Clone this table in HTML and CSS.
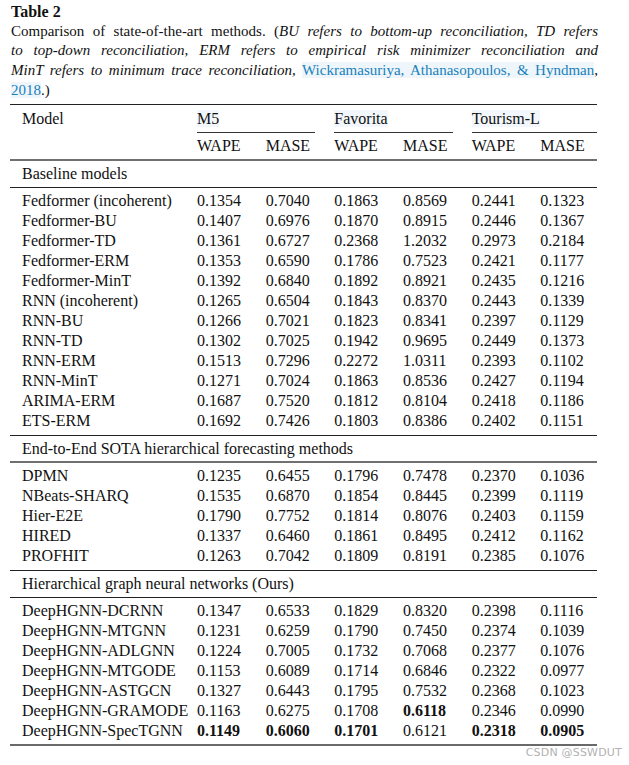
FILE: index.html
```html
<!DOCTYPE html>
<html lang="en">
<head>
<meta charset="utf-8">
<title>Table 2</title>
<link rel="stylesheet" href="styles.css">
</head>
<body>
<div class="page">
  <div class="caption">
    <div class="title">Table 2</div>
    <div class="line just">Comparison of state-of-the-art methods. (<i>BU refers to bottom-up reconciliation, TD refers</i></div>
    <div class="line just"><i>to top-down reconciliation, ERM refers to empirical risk minimizer reconciliation and</i></div>
    <div class="line just"><i>MinT refers to minimum trace reconciliation,</i> <a class="ref">Wickramasuriya, Athanasopoulos, &amp; Hyndman</a>,</div>
    <div class="line"><a class="ref">2018</a>.)</div>
  </div>

  <div class="tbl">
    <div class="row hdr1">
      <div class="cell">Model</div>
      <div class="cell grp"><div class="grp-line"><span class="hl">M5</span></div></div>
      <div class="cell grp"><div class="grp-line"><span class="hl">Favorita</span></div></div>
      <div class="cell grp last"><div class="grp-line"><span class="hl">Tourism-L</span></div></div>
    </div>
    <div class="row hdr2">
      <div class="cell"></div>
      <div class="cell">WAPE</div><div class="cell">MASE</div>
      <div class="cell">WAPE</div><div class="cell">MASE</div>
      <div class="cell">WAPE</div><div class="cell">MASE</div>
    </div>

    <div class="section thin">Baseline models</div>
    <div class="group">
      <div class="row data"><div class="cell">Fedformer (incoherent)</div><div class="cell">0.1354</div><div class="cell">0.7040</div><div class="cell">0.1863</div><div class="cell">0.8569</div><div class="cell">0.2441</div><div class="cell">0.1323</div></div>
      <div class="row data"><div class="cell">Fedformer-BU</div><div class="cell">0.1407</div><div class="cell">0.6976</div><div class="cell">0.1870</div><div class="cell">0.8915</div><div class="cell">0.2446</div><div class="cell">0.1367</div></div>
      <div class="row data"><div class="cell">Fedformer-TD</div><div class="cell">0.1361</div><div class="cell">0.6727</div><div class="cell">0.2368</div><div class="cell">1.2032</div><div class="cell">0.2973</div><div class="cell">0.2184</div></div>
      <div class="row data"><div class="cell">Fedformer-ERM</div><div class="cell">0.1353</div><div class="cell">0.6590</div><div class="cell">0.1786</div><div class="cell">0.7523</div><div class="cell">0.2421</div><div class="cell">0.1177</div></div>
      <div class="row data"><div class="cell">Fedformer-MinT</div><div class="cell">0.1392</div><div class="cell">0.6840</div><div class="cell">0.1892</div><div class="cell">0.8921</div><div class="cell">0.2435</div><div class="cell">0.1216</div></div>
      <div class="row data"><div class="cell">RNN (incoherent)</div><div class="cell">0.1265</div><div class="cell">0.6504</div><div class="cell">0.1843</div><div class="cell">0.8370</div><div class="cell">0.2443</div><div class="cell">0.1339</div></div>
      <div class="row data"><div class="cell">RNN-BU</div><div class="cell">0.1266</div><div class="cell">0.7021</div><div class="cell">0.1823</div><div class="cell">0.8341</div><div class="cell">0.2397</div><div class="cell">0.1129</div></div>
      <div class="row data"><div class="cell">RNN-TD</div><div class="cell">0.1302</div><div class="cell">0.7025</div><div class="cell">0.1942</div><div class="cell">0.9695</div><div class="cell">0.2449</div><div class="cell">0.1373</div></div>
      <div class="row data"><div class="cell">RNN-ERM</div><div class="cell">0.1513</div><div class="cell">0.7296</div><div class="cell">0.2272</div><div class="cell">1.0311</div><div class="cell">0.2393</div><div class="cell">0.1102</div></div>
      <div class="row data"><div class="cell">RNN-MinT</div><div class="cell">0.1271</div><div class="cell">0.7024</div><div class="cell">0.1863</div><div class="cell">0.8536</div><div class="cell">0.2427</div><div class="cell">0.1194</div></div>
      <div class="row data"><div class="cell">ARIMA-ERM</div><div class="cell">0.1687</div><div class="cell">0.7520</div><div class="cell">0.1812</div><div class="cell">0.8104</div><div class="cell">0.2418</div><div class="cell">0.1186</div></div>
      <div class="row data"><div class="cell">ETS-ERM</div><div class="cell">0.1692</div><div class="cell">0.7426</div><div class="cell">0.1803</div><div class="cell">0.8386</div><div class="cell">0.2402</div><div class="cell">0.1151</div></div>
    </div>

    <div class="section thick">End-to-End SOTA hierarchical forecasting methods</div>
    <div class="group">
      <div class="row data"><div class="cell">DPMN</div><div class="cell">0.1235</div><div class="cell">0.6455</div><div class="cell">0.1796</div><div class="cell">0.7478</div><div class="cell">0.2370</div><div class="cell">0.1036</div></div>
      <div class="row data"><div class="cell">NBeats-SHARQ</div><div class="cell">0.1535</div><div class="cell">0.6870</div><div class="cell">0.1854</div><div class="cell">0.8445</div><div class="cell">0.2399</div><div class="cell">0.1119</div></div>
      <div class="row data"><div class="cell">Hier-E2E</div><div class="cell">0.1790</div><div class="cell">0.7752</div><div class="cell">0.1814</div><div class="cell">0.8076</div><div class="cell">0.2403</div><div class="cell">0.1159</div></div>
      <div class="row data"><div class="cell">HIRED</div><div class="cell">0.1337</div><div class="cell">0.6460</div><div class="cell">0.1861</div><div class="cell">0.8495</div><div class="cell">0.2412</div><div class="cell">0.1162</div></div>
      <div class="row data"><div class="cell">PROFHIT</div><div class="cell">0.1263</div><div class="cell">0.7042</div><div class="cell">0.1809</div><div class="cell">0.8191</div><div class="cell">0.2385</div><div class="cell">0.1076</div></div>
    </div>

    <div class="section thin">Hierarchical graph neural networks (Ours)</div>
    <div class="group final">
      <div class="row data"><div class="cell">DeepHGNN-DCRNN</div><div class="cell">0.1347</div><div class="cell">0.6533</div><div class="cell">0.1829</div><div class="cell">0.8320</div><div class="cell">0.2398</div><div class="cell">0.1116</div></div>
      <div class="row data"><div class="cell">DeepHGNN-MTGNN</div><div class="cell">0.1231</div><div class="cell">0.6259</div><div class="cell">0.1790</div><div class="cell">0.7450</div><div class="cell">0.2374</div><div class="cell">0.1039</div></div>
      <div class="row data"><div class="cell">DeepHGNN-ADLGNN</div><div class="cell">0.1224</div><div class="cell">0.7005</div><div class="cell">0.1732</div><div class="cell">0.7068</div><div class="cell">0.2377</div><div class="cell">0.1076</div></div>
      <div class="row data"><div class="cell">DeepHGNN-MTGODE</div><div class="cell">0.1153</div><div class="cell">0.6089</div><div class="cell">0.1714</div><div class="cell">0.6846</div><div class="cell">0.2322</div><div class="cell">0.0977</div></div>
      <div class="row data"><div class="cell">DeepHGNN-ASTGCN</div><div class="cell">0.1327</div><div class="cell">0.6443</div><div class="cell">0.1795</div><div class="cell">0.7532</div><div class="cell">0.2368</div><div class="cell">0.1023</div></div>
      <div class="row data"><div class="cell">DeepHGNN-GRAMODE</div><div class="cell">0.1163</div><div class="cell">0.6275</div><div class="cell">0.1708</div><div class="cell b">0.6118</div><div class="cell">0.2346</div><div class="cell">0.0990</div></div>
      <div class="row data"><div class="cell">DeepHGNN-SpecTGNN</div><div class="cell b">0.1149</div><div class="cell b">0.6060</div><div class="cell b">0.1701</div><div class="cell">0.6121</div><div class="cell b">0.2318</div><div class="cell b">0.0905</div></div>
    </div>
  </div>
  <div class="watermark">CSDN @SSWDUT</div>
</div>
</body>
</html>
```

FILE: styles.css
```css
html, body {
  margin: 0;
  padding: 0;
  background: #ffffff;
}

.page {
  width: 629px;
  padding-top: 2px;
  font-family: "Liberation Serif", "Times New Roman", serif;
  font-size: 16px;
  color: #111111;
}

.caption {
  padding: 0 31px 0 11px;
  font-size: 15px;
  line-height: 19.7px;
}

.title {
  font-size: 16px;
  font-weight: bold;
}

.line.just {
  text-align: justify;
  text-align-last: justify;
}

.ref {
  color: #1a7fba;
  background: #eef6fb;
  text-decoration: none;
}

.tbl {
  margin: 3px 0 0 10px;
  width: 587px;
  border-top: 1px solid #222222;
}

.row {
  display: grid;
  grid-template-columns: 175px repeat(6, 1fr);
}

.cell {
  padding-left: 12px;
  white-space: nowrap;
}

.hdr1 {
  height: 28px;
  line-height: 27px;
}

.hdr1 .grp {
  grid-column: span 2;
  padding-right: 7px;
}

.hdr1 .grp.last {
  padding-right: 0;
}

.grp-line {
  border-bottom: 1px solid #333333;
  height: 27px;
}

.hl {
  background: #f1f7fc;
}

.hdr2 {
  height: 26px;
  line-height: 26px;
  border-bottom: 2px solid #707070;
}

.section {
  height: 26px;
  line-height: 26px;
  padding-left: 12px;
}

.section.thin {
  border-bottom: 1px solid #222222;
}

.section.thick {
  height: 25px;
  border-bottom: 2px solid #707070;
}

.group {
  padding: 3px 0 4px;
  border-bottom: 1px solid #222222;
}

.group.final {
  padding-bottom: 3px;
  border-bottom: 2px solid #6a6a6a;
}

.data {
  height: 20px;
  line-height: 20px;
}

.b {
  font-weight: bold;
}

.watermark {
  text-align: right;
  padding-right: 7px;
  font-family: "DejaVu Sans", "Liberation Sans", sans-serif;
  font-size: 11px;
  line-height: 13px;
  color: #b2b2b2;
  letter-spacing: 0.2px;
}
```
